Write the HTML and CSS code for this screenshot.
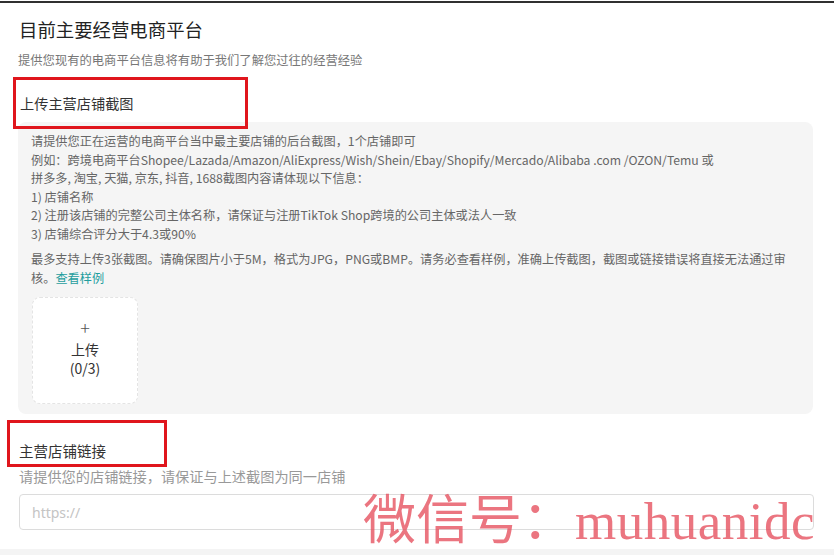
FILE: index.html
```html
<!DOCTYPE html>
<html lang="zh-CN">
<head>
    <meta charset="UTF-8">
    <meta name="viewport" content="width=device-width, initial-scale=1.0">
    <title>目前主要经营电商平台</title>
    <link rel="stylesheet" href="styles.css">
</head>
<body>
    <div class="topline"></div>
    <div class="page">
        <h1 class="title">目前主要经营电商平台</h1>
        <p class="desc">提供您现有的电商平台信息将有助于我们了解您过往的经营经验</p>

        <div class="field-label">
            上传主营店铺截图
            <span class="mark mark-shot"></span>
        </div>
        <div class="panel">
            <p>
                请提供您正在运营的电商平台当中最主要店铺的后台截图，1个店铺即可<br>
                例如：跨境电商平台Shopee/Lazada/Amazon/AliExpress/Wish/Shein/Ebay/Shopify/Mercado/Alibaba .com /OZON/Temu 或<br>
                拼多多, 淘宝, 天猫, 京东, 抖音, 1688截图内容请体现以下信息：<br>
                1) 店铺名称<br>
                2) 注册该店铺的完整公司主体名称，请保证与注册TikTok Shop跨境的公司主体或法人一致<br>
                3) 店铺综合评分大于4.3或90%
            </p>
            <p>
                最多支持上传3张截图。请确保图片小于5M，格式为JPG，PNG或BMP。请务必查看样例，准确上传截图，截图或链接错误将直接无法通过审核。<a class="sample" href="#">查看样例</a>
            </p>
            <div class="upload">
                <span class="plus">+</span>
                <span>上传</span>
                <span>(0/3)</span>
            </div>
        </div>

        <div class="field-label field-label-link">
            主营店铺链接
            <span class="mark mark-link"></span>
        </div>
        <p class="hint">请提供您的店铺链接，请保证与上述截图为同一店铺</p>
        <input class="link-input" type="text" placeholder="https://">

        <div class="watermark">微信号：<span class="wm-latin">muhuanidc</span></div>
    </div>
</body>
</html>
```

FILE: styles.css
```css
html {
    background-color: #f4f4f4;
}

body {
    margin: 0;
    font-family: "Noto Sans CJK SC", "Noto Sans", sans-serif;
    color: #333;
    background-color: #fff;
}

.topline {
    height: 2px;
    border-top: 1px solid #fff;
    background-color: #303030;
}

.page {
    position: relative;
    height: 546px;
    padding: 13px 21px 0 18px;
    box-sizing: border-box;
    overflow: hidden;
}

.title {
    margin: 0;
    padding-left: 1px;
    font-size: 18.4px;
    font-weight: 400;
    line-height: 26px;
    color: #222;
}

.desc {
    margin: 9px 0 0;
    font-size: 12.3px;
    line-height: 18px;
    color: #777;
}

.field-label {
    position: relative;
    margin-top: 24px;
    padding-left: 2px;
    font-size: 14.2px;
    line-height: 20px;
    color: #333;
}

.field-label-link {
    margin-top: 27px;
    padding-left: 1px;
    font-size: 14.5px;
}

.mark {
    position: absolute;
    border: 3px solid #e0161d;
    box-sizing: border-box;
}

.mark-shot {
    left: -5px;
    top: -16px;
    width: 235px;
    height: 52px;
}

.mark-link {
    left: -11px;
    top: -21px;
    width: 160px;
    height: 47px;
}

.panel {
    margin-top: 9px;
    padding: 10px 13px 10px;
    background-color: #f5f5f5;
    border-radius: 8px;
    font-size: 12.2px;
    line-height: 18.5px;
    color: #666;
}

.panel p {
    margin: 0 0 7px;
}

.sample {
    color: #1f9e9e;
    text-decoration: none;
}

.upload {
    width: 106px;
    height: 107px;
    margin-top: 10px;
    margin-left: 1px;
    padding-bottom: 7px;
    display: flex;
    flex-direction: column;
    align-items: center;
    justify-content: center;
    background-color: #fff;
    border: 1px dashed #e4e4e4;
    border-radius: 8px;
    box-sizing: border-box;
    font-size: 14px;
    line-height: 19px;
    color: #333;
}

.plus {
    font-size: 18px;
    font-weight: 300;
    line-height: 22px;
    margin-bottom: 2px;
    color: #555;
}

.hint {
    margin: 5px 0 0;
    padding-left: 1px;
    font-size: 14.2px;
    line-height: 20px;
    color: #999;
}

.link-input {
    display: block;
    width: 100%;
    height: 36px;
    margin-top: 8px;
    margin-left: 1px;
    padding: 0 12px;
    box-sizing: border-box;
    border: 1px solid #dcdcdc;
    border-radius: 4px;
    font-family: "Noto Sans", sans-serif;
    font-size: 14px;
    background: #fff;
}

.link-input::placeholder {
    color: #c4c4c4;
}

.watermark {
    position: absolute;
    left: 363px;
    top: 486px;
    font-size: 53px;
    line-height: 54px;
    color: rgba(230, 78, 92, 0.78);
    white-space: nowrap;
    pointer-events: none;
}

.wm-latin {
    font-family: "Liberation Serif", serif;
    letter-spacing: 0.5px;
}
```
